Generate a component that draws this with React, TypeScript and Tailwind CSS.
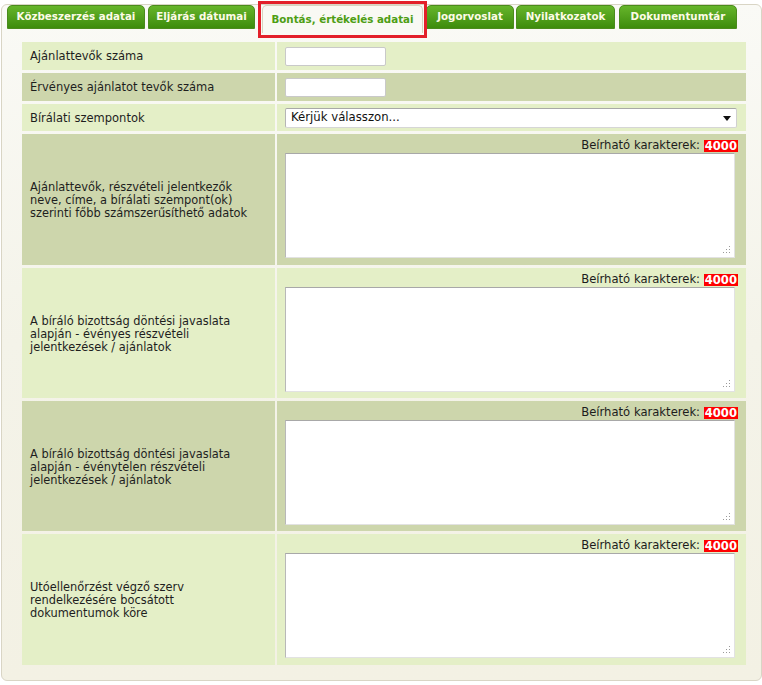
import React from "react";

const tabs = [
  { label: "Közbeszerzés adatai", w: "w-[138px]", ml: "ml-[5px]", active: false },
  { label: "Eljárás dátumai", w: "w-[107px]", ml: "ml-[3px]", active: false },
  { label: "Bontás, értékelés adatai", w: "w-[161px]", ml: "ml-[7px]", active: true },
  { label: "Jogorvoslat", w: "w-[88px]", ml: "ml-[3px]", active: false },
  { label: "Nyilatkozatok", w: "w-[99px]", ml: "ml-[2px]", active: false },
  { label: "Dokumentumtár", w: "w-[118px]", ml: "ml-[4px]", active: false },
];

function Dots() {
  return (
    <svg width="8" height="8" viewBox="0 0 8 8" className="absolute right-[3px] bottom-[3px]">
      <rect x="6" y="0" width="1" height="1" fill="#9a9a9a" />
      <rect x="6" y="3" width="1" height="1" fill="#9a9a9a" />
      <rect x="3" y="3" width="1" height="1" fill="#9a9a9a" />
      <rect x="6" y="6" width="1" height="1" fill="#9a9a9a" />
      <rect x="3" y="6" width="1" height="1" fill="#9a9a9a" />
      <rect x="0" y="6" width="1" height="1" fill="#9a9a9a" />
    </svg>
  );
}

function TextAreaCell() {
  return (
    <div className="flex flex-col items-start pl-[8px] pt-[5px]">
      <div className="w-[453px] flex justify-end items-center h-[13px] text-[11.6px] leading-[13px] text-[#1c1c1c]">
        <span>Beírható karakterek:&nbsp;</span>
        <span className="bg-[#ff0000] text-white font-bold px-[1px] leading-[12px]">4000</span>
      </div>
      <div className="relative mt-[1px] w-[450px] h-[105px] bg-white border border-t-[#a8a8a8] border-l-[#b8b8b8] border-r-[#e2e2e2] border-b-[#e2e2e2]">
        <Dots />
      </div>
    </div>
  );
}

export default function App() {
  const light = "bg-[#e4efc7]";
  const dark = "bg-[#cdd6ac]";
  return (
    <div className="relative w-[762px] h-[685px] bg-white font-['DejaVu_Sans',sans-serif] overflow-hidden">
      <div className="pt-[4px] pl-[1px]">
        <div className="w-[761px] h-[677px] border border-[#d9d5c5] rounded-[6px] bg-gradient-to-b from-[#fafaf6] via-[#f4f3e9] to-[#f3f1e4] flex flex-col">
          <div className="flex h-[25px] pt-[0px]">
            {tabs.map((t) =>
              t.active ? (
                <div
                  key={t.label}
                  className={`${t.w} ${t.ml} h-[28px] rounded-t-[5px] border border-b-0 border-[#d8d3bf] bg-[#f9f9f4] flex items-center justify-center text-[10.3px] font-bold text-[#4e9e14]`}
                >
                  {t.label}
                </div>
              ) : (
                <div
                  key={t.label}
                  className={`${t.w} ${t.ml} h-[24px] rounded-t-[5px] border border-[#4a8b1c] bg-gradient-to-b from-[#66b52a] to-[#3d8c0b] flex items-center justify-center text-[10.3px] font-bold text-[#fdfbe6]`}
                >
                  {t.label}
                </div>
              )
            )}
          </div>
          <div className="pl-[20px] pt-[12px]">
            <div className="w-[724px] grid grid-cols-[253px_469px] gap-x-[2px] gap-y-[3px] text-[#1e1e1e]">
              <div className={`${light} h-[28px] flex items-center pl-[8px] pt-[2px] text-[11.5px]`}>Ajánlattevők száma</div>
              <div className={`${light} h-[28px] flex items-center pl-[8px]`}>
                <div className="w-[101px] h-[19px] bg-white border border-[#c9c9c9] rounded-[2px]" />
              </div>
              <div className={`${dark} h-[28px] flex items-center pl-[8px] pt-[2px] text-[11.5px]`}>Érvényes ajánlatot tevők száma</div>
              <div className={`${dark} h-[28px] flex items-center pl-[8px]`}>
                <div className="w-[101px] h-[19px] bg-white border border-[#c9c9c9] rounded-[2px]" />
              </div>
              <div className={`${light} h-[27px] flex items-center pl-[8px] pt-[2px] text-[11.5px]`}>Bírálati szempontok</div>
              <div className={`${light} h-[27px] flex items-center pl-[8px]`}>
                <div className="w-[452px] h-[20px] bg-white border border-t-[#a8a8a8] border-l-[#b5b5b5] border-r-[#d0d0d0] border-b-[#d6d6d6] rounded-[2px] flex items-center justify-between pl-[5px] pr-[5px] text-[11.7px] text-[#111]">
                  <span className="pt-[1px]">Kérjük válasszon...</span>
                  <svg width="8" height="5" viewBox="0 0 8 5" className="mt-[2px]">
                    <path d="M0 0 H8 L4 5 Z" fill="#111" />
                  </svg>
                </div>
              </div>

              <div className={`${dark} h-[131px] flex items-center pl-[8px] text-[11.4px] leading-[13px]`}>
                <div className="mt-[2px]">
                  Ajánlattevők, részvételi jelentkezők
                  <br />
                  neve, címe, a bírálati szempont(ok)
                  <br />
                  szerinti főbb számszerűsíthető adatok
                </div>
              </div>
              <div className={`${dark} h-[131px]`}>
                <TextAreaCell />
              </div>

              <div className={`${light} h-[130px] flex items-center pl-[8px] text-[11.4px] leading-[13px]`}>
                <div className="mt-[2px]">
                  A bíráló bizottság döntési javaslata
                  <br />
                  alapján - évényes részvételi
                  <br />
                  jelentkezések / ajánlatok
                </div>
              </div>
              <div className={`${light} h-[130px]`}>
                <TextAreaCell />
              </div>

              <div className={`${dark} h-[130px] flex items-center pl-[8px] text-[11.4px] leading-[13px]`}>
                <div className="mt-[2px]">
                  A bíráló bizottság döntési javaslata
                  <br />
                  alapján - événytelen részvételi
                  <br />
                  jelentkezések / ajánlatok
                </div>
              </div>
              <div className={`${dark} h-[130px]`}>
                <TextAreaCell />
              </div>

              <div className={`${light} h-[131px] flex items-center pl-[8px] text-[11.4px] leading-[13px]`}>
                <div className="mt-[2px]">
                  Utóellenőrzést végző szerv
                  <br />
                  rendelkezésére bocsátott
                  <br />
                  dokumentumok köre
                </div>
              </div>
              <div className={`${light} h-[131px]`}>
                <TextAreaCell />
              </div>
            </div>
          </div>
        </div>
      </div>
      <div className="absolute left-[258px] top-[1px] w-[169px] h-[37px] border-[3px] border-[#e3202a]" />
    </div>
  );
}
